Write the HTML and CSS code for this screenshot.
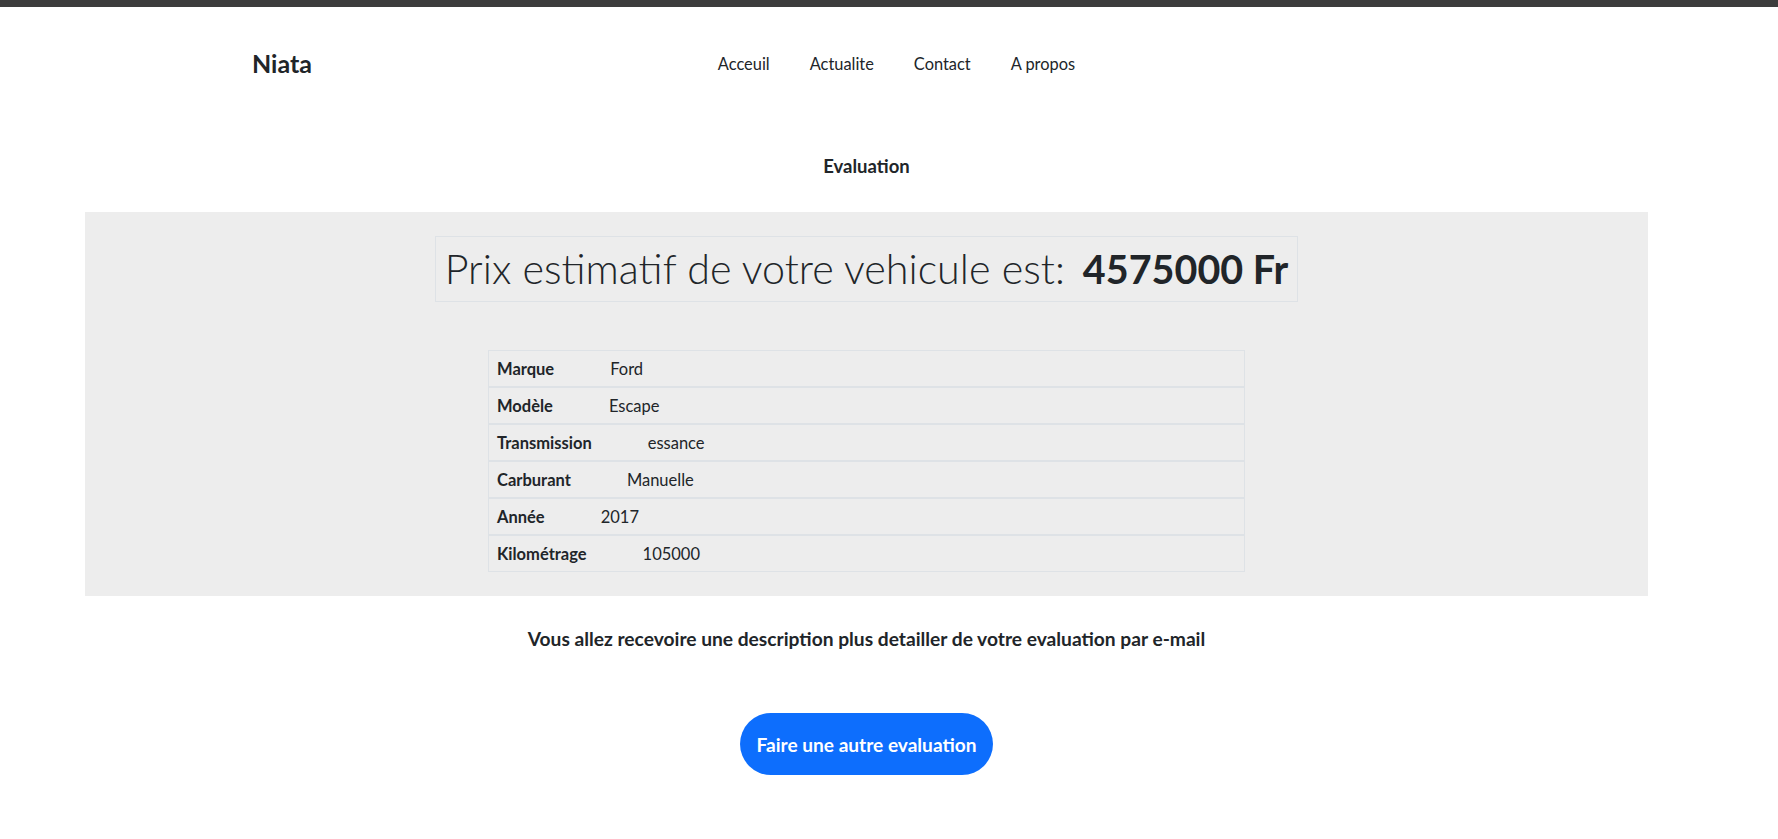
FILE: index.html
```html
<!DOCTYPE html>
<html lang="fr">
<head>
<meta charset="utf-8">
<title>Niata - Evaluation</title>
<link rel="stylesheet" href="styles.css">
</head>
<body>
<div class="topbar"></div>
<header class="site-header">
  <a class="brand" href="#">Niata</a>
  <nav class="nav">
    <a class="nav-link" href="#">Acceuil</a>
    <a class="nav-link" href="#">Actualite</a>
    <a class="nav-link" href="#">Contact</a>
    <a class="nav-link" href="#">A propos</a>
  </nav>
  <div class="header-spacer"></div>
</header>
<main class="main">
  <h2 class="title">Evaluation</h2>
  <section class="panel">
    <div class="price-box">
      <span class="price-label">Prix estimatif de votre vehicule est:</span>
      <strong class="price-value">4575000 Fr</strong>
    </div>
    <div class="specs">
      <div class="spec-row"><span class="spec-label">Marque</span><span class="spec-value">Ford</span></div>
      <div class="spec-row"><span class="spec-label">Modèle</span><span class="spec-value">Escape</span></div>
      <div class="spec-row"><span class="spec-label">Transmission</span><span class="spec-value">essance</span></div>
      <div class="spec-row"><span class="spec-label">Carburant</span><span class="spec-value">Manuelle</span></div>
      <div class="spec-row"><span class="spec-label">Année</span><span class="spec-value">2017</span></div>
      <div class="spec-row"><span class="spec-label">Kilométrage</span><span class="spec-value">105000</span></div>
    </div>
  </section>
  <p class="note">Vous allez recevoire une description plus detailler de votre evaluation par e-mail</p>
  <div class="actions">
    <a class="btn" href="#">Faire une autre evaluation</a>
  </div>
</main>
</body>
</html>
```

FILE: styles.css
```css
* { box-sizing: border-box; }

body {
  margin: 0;
  font-family: "Lato", "Open Sans", sans-serif;
  color: #212529;
  background: #ffffff;
}

.topbar {
  height: 7px;
  background: #3c3c3c;
}

.site-header {
  height: 112px;
  display: grid;
  grid-template-columns: 1fr auto 1fr;
  align-items: center;
  padding: 0 237px 0 252px;
}

.brand {
  font-size: 25px;
  font-weight: 700;
  color: #212529;
  text-decoration: none;
  justify-self: start;
}

.nav {
  display: flex;
  gap: 40px;
}

.nav-link {
  font-size: 16.4px;
  color: #212529;
  text-decoration: none;
}

.main {
  margin: 0 130px 0 85px;
  display: flex;
  flex-direction: column;
  align-items: center;
}

.title {
  margin: 0;
  padding: 35px 0 34px;
  font-size: 18.5px;
  line-height: 24px;
  font-weight: 700;
}

.panel {
  align-self: stretch;
  background: #ededed;
  padding: 24px 0;
  display: flex;
  flex-direction: column;
  align-items: center;
}

.price-box {
  display: flex;
  align-items: baseline;
  gap: 18px;
  border: 1px solid #dee2e6;
  padding: 0 9px;
  height: 66px;
  line-height: 63px;
}

.price-label {
  font-size: 41.3px;
  font-weight: 300;
}

.price-value {
  font-size: 39.5px;
  font-weight: 700;
}

.specs {
  margin-top: 48px;
  width: 757px;
}

.spec-row {
  height: 37px;
  border: 1px solid #dee2e6;
  display: flex;
  align-items: center;
  gap: 56px;
  padding: 0 8px;
  font-size: 16.5px;
  line-height: 24px;
}

.spec-label {
  font-weight: 700;
}

.spec-value {
  font-weight: 400;
}

.note {
  margin: 31px 0 0;
  font-size: 19.2px;
  line-height: 24px;
  font-weight: 700;
}

.actions {
  margin-top: 62px;
}

.btn {
  display: inline-flex;
  align-items: center;
  height: 62px;
  padding: 0 17px;
  border-radius: 31px;
  background: #0d6efd;
  color: #ffffff;
  font-size: 19.1px;
  font-weight: 700;
  text-decoration: none;
}
```
